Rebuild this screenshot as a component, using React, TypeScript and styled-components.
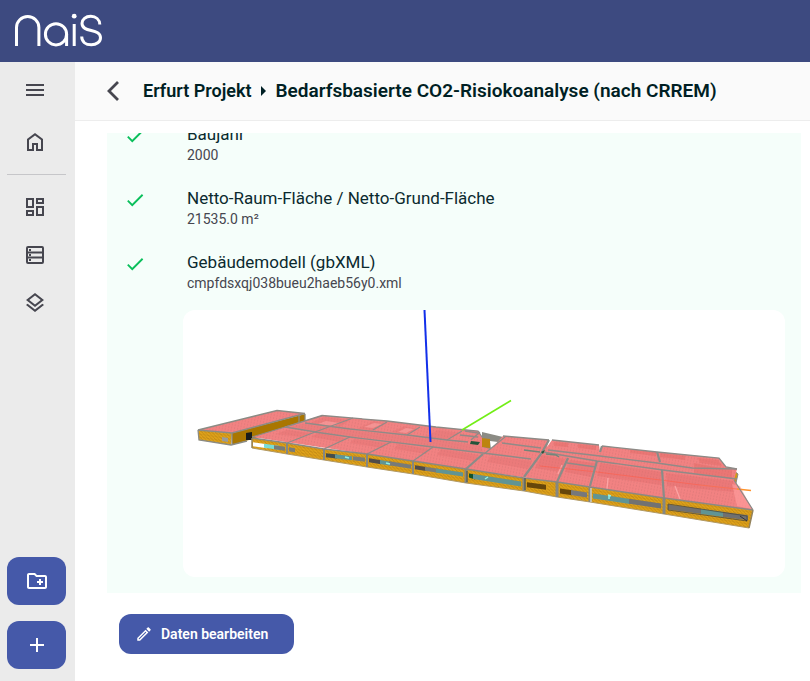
import React, { useLayoutEffect, useRef } from "react";
import styled, { createGlobalStyle } from "styled-components";
import {
  MdMenu,
  MdOutlineDashboard,
  MdOutlineLayers,
  MdOutlineCreateNewFolder,
  MdAdd,
  MdCheck,
  MdOutlineEdit,
  MdArrowRight,
} from "react-icons/md";

const GlobalStyle = createGlobalStyle`
  *, *::before, *::after { box-sizing: border-box; }
  body { margin: 0; background: #fff; font-family: Roboto, "Liberation Sans", sans-serif; }
  button { font: inherit; border: 0; cursor: pointer; }
`;

const Page = styled.div`
  display: flex;
  flex-direction: column;
  height: 100vh;
`;

const Header = styled.header`
  display: flex;
  align-items: center;
  flex: none;
  height: 62px;
  padding-left: 12px;
  background: #3d4a80;
`;

const Body = styled.div`
  display: flex;
  flex: 1;
  min-height: 0;
`;

const Sidebar = styled.nav`
  display: flex;
  flex-direction: column;
  flex: none;
  width: 75px;
  padding: 4px 9px 12px 7px;
  background: #ebebeb;
`;

const NavButton = styled.button<{ $gap?: number }>`
  display: flex;
  align-items: center;
  justify-content: center;
  width: 56px;
  height: 48px;
  margin-bottom: ${(p) => p.$gap ?? 0}px;
  padding: 0;
  background: none;
  color: #46464f;
  font-size: 24px;
`;

const Divider = styled.hr`
  width: 100%;
  margin: 0 0 8px;
  border: 0;
  border-top: 1px solid #c6c6c9;
`;

const SideActions = styled.div`
  display: flex;
  flex-direction: column;
  gap: 16px;
  margin-top: auto;
`;

const SideAction = styled.button`
  display: flex;
  align-items: center;
  justify-content: center;
  height: 48px;
  padding: 0;
  border-radius: 12px;
  background: #4559a9;
  color: #fff;
  font-size: 24px;
`;

const Main = styled.main`
  display: flex;
  flex: 1;
  flex-direction: column;
  min-width: 0;
`;

const TitleBar = styled.div`
  display: flex;
  align-items: center;
  flex: none;
  height: 59px;
  padding-left: 26px;
  border-bottom: 1px solid #ededed;
  background: #fafafa;
`;

const BackButton = styled.button`
  display: flex;
  margin-right: 18px;
  padding: 0;
  background: none;
  color: #46464f;
`;

const Title = styled.h1`
  display: flex;
  align-items: center;
  margin: 0;
  color: #001f24;
  font-size: 18px;
  font-weight: 600;
  line-height: 24px;
  white-space: nowrap;
`;

const CurrentPage = styled.span`
  font-size: 19px;
`;

const Content = styled.div`
  display: flex;
  flex: 1;
  flex-direction: column;
  align-items: flex-start;
  gap: 21px;
  min-height: 0;
  padding: 12px 9px 27px 32px;
`;

const Panel = styled.section`
  flex: 1;
  align-self: stretch;
  min-height: 0;
  padding: 0 16px 16px 17px;
  overflow-y: auto;
  scrollbar-width: none;
  background: #f5fefa;
`;

const FactRow = styled.div`
  display: flex;
  height: 64px;
  padding: 10px 0;
`;

const CheckCell = styled.div`
  display: flex;
  align-items: center;
  width: 63px;
  height: 28px;
  color: #0abf5b;
  font-size: 22px;
`;

const FactLabel = styled.h2`
  margin: 0;
  color: #0b2a2f;
  font-size: 17px;
  font-weight: 400;
  line-height: 24px;
`;

const FactValue = styled.p`
  margin: 0;
  color: #46464f;
  font-size: 14px;
  line-height: 18px;
`;

const ModelCard = styled.figure`
  height: 267px;
  margin: 6px 0 0 59px;
  overflow: hidden;
  border-radius: 12px;
  background: #fff;

  svg {
    display: block;
    width: 100%;
    height: 100%;
  }
`;

const EditButton = styled.button`
  display: flex;
  align-items: center;
  flex: none;
  gap: 8px;
  height: 40px;
  margin-left: 12px;
  padding: 0 26px 0 16px;
  border-radius: 12px;
  background: #4559a9;
  color: #fff;
  font-size: 14px;
  font-weight: 600;

  svg {
    font-size: 18px;
  }
`;

function Logo() {
  return (
    <svg width="94" height="42" viewBox="12 10 94 42" fill="none" stroke="#fff" strokeWidth="3" role="img" aria-label="NaiS">
      <path d="M16.500 46V27.500a11.200 11 0 0 1 22.400 0V46" />
      <circle cx="56" cy="34.300" r="10.600" />
      <path d="M66.600 34V46M74.200 24V46" />
      <circle cx="74.200" cy="16.200" r="2.400" fill="#fff" stroke="none" />
      <path d="M99.800 24.500c-.2-5-4-8.200-9-8.200-5.200 0-8.800 3-8.800 7 0 10 18.500 4.500 18.500 14.500 0 4-4 7-9.200 7-5.800 0-9.500-3.200-9.600-8.300" />
    </svg>
  );
}

function HomeIcon() {
  return (
    <svg width="24" height="24" viewBox="0 0 24 24" fill="currentColor">
      <path d="M6 19h3v-6h6v6h3v-9l-6-4.500L6 10v9zm-2 2V9l8-6 8 6v12h-7v-6h-2v6H4z" />
    </svg>
  );
}

function ListIcon() {
  return (
    <svg width="24" height="24" viewBox="0 0 24 24" fill="none" stroke="currentColor">
      <rect x="4" y="4" width="16" height="16" rx="1" strokeWidth="2" />
      <path d="M4 9.500h16M4 14.500h16" strokeWidth="2" />
      <path d="M6 7h2M6 12h2M6 17h2" strokeWidth="2" />
    </svg>
  );
}

type Pt = [number, number];

const frontTop: Pt[] = [[252, 438], [287, 443], [324, 449], [367, 454], [413, 461], [466, 469], [524, 478], [557, 482], [590, 487], [664, 498], [753, 510]];
const frontBottom: Pt[] = [[252, 448], [287, 454], [324, 460], [367, 467], [413, 474], [466, 483], [524, 491], [557, 497], [590, 502], [664, 514], [749, 528]];

const seams = [
  "M287 443L315 432L353 418", "M324 449L350 437", "M367 454L391 442", "M413 461L433 447",
  "M567 463L596 467", "M285 427L322 416", "M373 430L387 422", "M407 435L420 427",
  "M447 440L462 431", "M484 454L505 437", "M316 432L285 427", "M315 432L350 437L433 447L483 453L531 459",
  "M305 423L350 429L407 435L447 440L468 442", "M502 443L541 448", "M543 452L597 461L663 470L737 479",
  "M548 450L600 456L657 463L692 468L737 469", "M465 431L478 433M460 435L478 437M471 440L480 432",
];

const wideSeams = [
  "M466 469L483 454", "M524 477L541 454L549 440", "M557 482L568 458", "M590 486L597 461M600 452L602 446",
  "M664 498L662 470M660 462L657 452",
];

/* Glazed strips along the facade: start and end x with their fill. */
const strips: [number, number, string][] = [
  [253, 267, "#fff"], [264, 279, "#79dcd4"], [274, 285, "#777b79"], [289, 295, "#777b79"],
  [326, 337, "#454d4b"], [335, 352, "#609494"], [353, 365, "#777b79"], [369, 381, "#514c49"],
  [380, 391, "#609494"], [389, 411, "#777b79"], [415, 426, "#514c49"], [425, 438, "#777b79"],
  [436, 463, "#609494"], [469, 475, "#12532b"], [473, 521, "#609494"], [527, 546, "#66460a"],
  [560, 572, "#66460a"], [571, 587, "#76787b"], [593, 630, "#609494"], [629, 661, "#727272"],
  [668, 702, "#707070"], [701, 724, "#609494"], [723, 748, "#707070"],
];

const yOn = (line: Pt[], x: number) => {
  const i = Math.max(1, line.findIndex((p) => p[0] >= x));
  const [a, b] = [line[i - 1], line[i]];
  return a[1] + ((b[1] - a[1]) * (x - a[0])) / (b[0] - a[0]);
};

const points = (list: Pt[]) => list.map((p) => p.join(",")).join(" ");

function stripPoints(x1: number, x2: number) {
  const depth = (x: number) => (x < 560 ? 4 : 6);
  const top = (x: number) => yOn(frontTop, x) + depth(x);
  const bottom = (x: number) => top(x) + (x < 470 ? 4 : 5);
  return points([[x1, top(x1)], [x2, top(x2)], [x2, bottom(x2)], [x1, bottom(x1)]]);
}

function BuildingModel() {
  return (
    <svg viewBox="183 310 602 267" role="img" aria-label="Gebäudemodell">
      <defs>
        <pattern id="brick" width="4" height="3" patternUnits="userSpaceOnUse" patternTransform="rotate(9)">
          <rect width="4" height="3" fill="#e2a51a" />
          <path d="M0 .5L4 2.500" stroke="#b98214" strokeWidth="1" />
        </pattern>
        <pattern id="roof" width="3" height="3" patternUnits="userSpaceOnUse" patternTransform="rotate(12)">
          <rect width="3" height="3" fill="#f28282" />
          <rect width="1" height="2" fill="#e47c7c" />
        </pattern>
      </defs>

      {/* Detached wing */}
      <path d="M232 433L305 414V423L283 430L232 445Z" fill="#a97600" />
      <path d="M198 430L232 433L231 445L199 440Z" fill="url(#brick)" />
      <path d="M198 430L277 410.500L305 413.500L232 433Z" fill="url(#roof)" />
      <path d="M198 430L277 410.500L305 413.500L232 433ZM198 430L199 440L231 445L247 441M305 422V414M232 433V445M299 415V423" fill="none" stroke="#8b8b84" strokeWidth="1.300" />
      <path d="M222 437l6 1v4l-6-1Z" fill="#999b9a" />
      <path d="M246 433l6-1v8h-6Z" fill="#171c1c" />

      {/* Rear walls */}
      <path d="M482 432L503 437V453H482Z" fill="#8b8b84" />
      <path d="M481 438L490 439V448L481 447Z" fill="#bd8410" />
      <path d="M490 441L498 442L491 449Z" fill="#fff" />
      <path d="M733 470L738 474L736 483L730 479Z" fill="#d39a11" stroke="#8b8b84" />

      {/* Roof */}
      <path d="M252 437L285 427L322 415.500L387 421L436 427L478 431L482 437V447L491 449L503 436L549 440L547 447L552 440L599 445L600 452L602 446L657 452L719 458L726 467L737 469L734 480L753 510L664 498L590 487L466 469L367 454Z" fill="url(#roof)" />
      <path d="M310 423L324 417L350 420L340 427ZM357 429L374 421L385 424L372 430ZM391 432L405 426L418 429L406 434ZM425 437L438 430L460 433L446 439Z" fill="#d96c6c" opacity=".3" />
      <path d="M318 424L326 421L340 423L334 426ZM364 427L374 423L382 424L373 428ZM398 432L406 428L414 429L406 433Z" fill="#ffacac" opacity=".5" />
      <path d="M286 427L350 436L433 446L483 452L481 446L447 441L350 430L303 424Z" fill="#d86e6e" opacity=".25" />
      <path d="M276 434L287 430L312 433L300 437ZM311 437L318 433L346 438L340 442ZM350 443L354 439L387 443L382 448ZM394 449L398 444L430 449L426 454ZM437 455L441 449L479 455L474 461ZM487 462L491 456L532 461L528 469Z" fill="#db6969" opacity=".28" />
      <path d="M542 455L565 459L561 472L535 468ZM570 460L595 463L591 477L565 472ZM600 463L661 472V485L597 476ZM666 473L733 481L735 492L667 486Z" fill="#d96464" opacity=".3" />
      <path d="M732 484L737 506L752 509L740 486Z" fill="#ff9c9c" opacity=".65" />
      <path d="M608 478L607 489M675 486L680 499M562 465L558 474" fill="none" stroke="#ffadad" strokeWidth="1.300" opacity=".8" />
      <path d="M630 449L656 452V456L630 453ZM660 453L685 456V460L660 457ZM698 458L718 460L722 466L700 463ZM554 442L568 443V447L554 446ZM578 444L596 446V450L578 448ZM694 463L732 470V478L694 473Z" fill="#dc605c" opacity=".35" />
      <path d="M540 466L597 472L700 485" fill="none" stroke="#ff5d49" opacity=".6" />
      <path d="M700 485L737 489" stroke="#ff6d4b" strokeWidth="1" opacity=".7" />
      <path d="M737 489L751 490.500" stroke="#ff922b" strokeWidth="1.500" />
      <path d="M252 437L285 427L322 415.500L387 421L436 427L478 431L482 437M503 436L549 440M552 440L599 445M602 446L657 452L719 458L726 467L737 469M734 480L753 510" fill="none" stroke="#8d8a86" strokeWidth="1.300" />
      {seams.map((d) => (
        <path key={d} d={d} fill="none" stroke="#918a87" strokeWidth="1.300" />
      ))}
      {wideSeams.map((d) => (
        <path key={d} d={d} fill="none" stroke="#8a8c88" strokeWidth="2.200" />
      ))}
      <path d="M471 441L480 442L478 445L470 444ZM541 452L545 450L543 454Z" fill="#23543a" />
      <path d="M524 450L540 452M546 454L556 455L559 457" fill="none" stroke="#71867a" strokeWidth="1.500" />

      {/* Facade */}
      <polygon points={points([...frontTop, ...[...frontBottom].reverse()])} fill="url(#brick)" />
      {strips.map(([a, b, fill]) => (
        <polygon key={a} points={stripPoints(a, b)} fill={fill} />
      ))}
      <path d="M345 457l4 1M386 463l4 1M485 479l3-2M608 495l3 1M609 499v-3" stroke="#8df0e8" strokeWidth="1.500" />
      <path d="M668 504L747 516V521L668 510Z" fill="none" stroke="#4d4a3f" strokeWidth=".8" />
      <path d="M740 516L747 521" stroke="#333" />
      <polyline points={points(frontTop)} fill="none" stroke="#8b8981" strokeWidth="1.500" />
      <polyline points={points(frontBottom)} fill="none" stroke="#b19a67" strokeWidth="1" />
      {frontTop.slice(1, 10).map(([x, y], i) => (
        <path key={x} d={`M${x} ${y}L${x} ${frontBottom[i + 1][1]}`} stroke="#858782" strokeWidth={i > 3 ? 3 : 2} />
      ))}
      <path d="M753 510L749 528M252 438V448" stroke="#94835c" strokeWidth="1.500" />
      <path d="M467 471V482M525 478V490" stroke="#42514b" />
      <path d="M591 488V502" stroke="#e8eeeb" />

      {/* Axes */}
      <path d="M424.500 310L430.500 442" stroke="#1230ea" strokeWidth="2" />
      <path d="M511 400.500L462 430" stroke="#72ee16" strokeWidth="1.600" />
    </svg>
  );
}

const facts = [
  { label: "Baujahr", value: "2000" },
  { label: "Netto-Raum-Fläche / Netto-Grund-Fläche", value: "21535.0 m²" },
  { label: "Gebäudemodell (gbXML)", value: "cmpfdsxqj038bueu2haeb56y0.xml" },
];

export default function App() {
  const panelRef = useRef<HTMLElement>(null);

  useLayoutEffect(() => {
    const panel = panelRef.current;
    if (panel) panel.scrollTop = panel.scrollHeight;
  }, []);

  return (
    <Page>
      <GlobalStyle />
      <Header>
        <Logo />
      </Header>
      <Body>
        <Sidebar>
          <NavButton $gap={4} aria-label="Menü"><MdMenu /></NavButton>
          <NavButton $gap={8} aria-label="Startseite"><HomeIcon /></NavButton>
          <Divider />
          <NavButton aria-label="Dashboard"><MdOutlineDashboard /></NavButton>
          <NavButton aria-label="Liste"><ListIcon /></NavButton>
          <NavButton aria-label="Ebenen"><MdOutlineLayers /></NavButton>
          <SideActions>
            <SideAction aria-label="Neuer Ordner"><MdOutlineCreateNewFolder /></SideAction>
            <SideAction aria-label="Hinzufügen"><MdAdd /></SideAction>
          </SideActions>
        </Sidebar>
        <Main>
          <TitleBar>
            <BackButton aria-label="Zurück">
              <svg width="24" height="24" viewBox="0 0 24 24" fill="none" stroke="currentColor" strokeWidth="2.800">
                <path d="M17 3L8 12l9 9" />
              </svg>
            </BackButton>
            <Title>
              <span>Erfurt Projekt</span>
              <MdArrowRight size={24} />
              <CurrentPage>Bedarfsbasierte CO2-Risiokoanalyse (nach CRREM)</CurrentPage>
            </Title>
          </TitleBar>
          <Content>
            <Panel ref={panelRef}>
              {facts.map((fact) => (
                <FactRow key={fact.label}>
                  <CheckCell><MdCheck /></CheckCell>
                  <div>
                    <FactLabel>{fact.label}</FactLabel>
                    <FactValue>{fact.value}</FactValue>
                  </div>
                </FactRow>
              ))}
              <ModelCard><BuildingModel /></ModelCard>
            </Panel>
            <EditButton>
              <MdOutlineEdit />
              Daten bearbeiten
            </EditButton>
          </Content>
        </Main>
      </Body>
    </Page>
  );
}
